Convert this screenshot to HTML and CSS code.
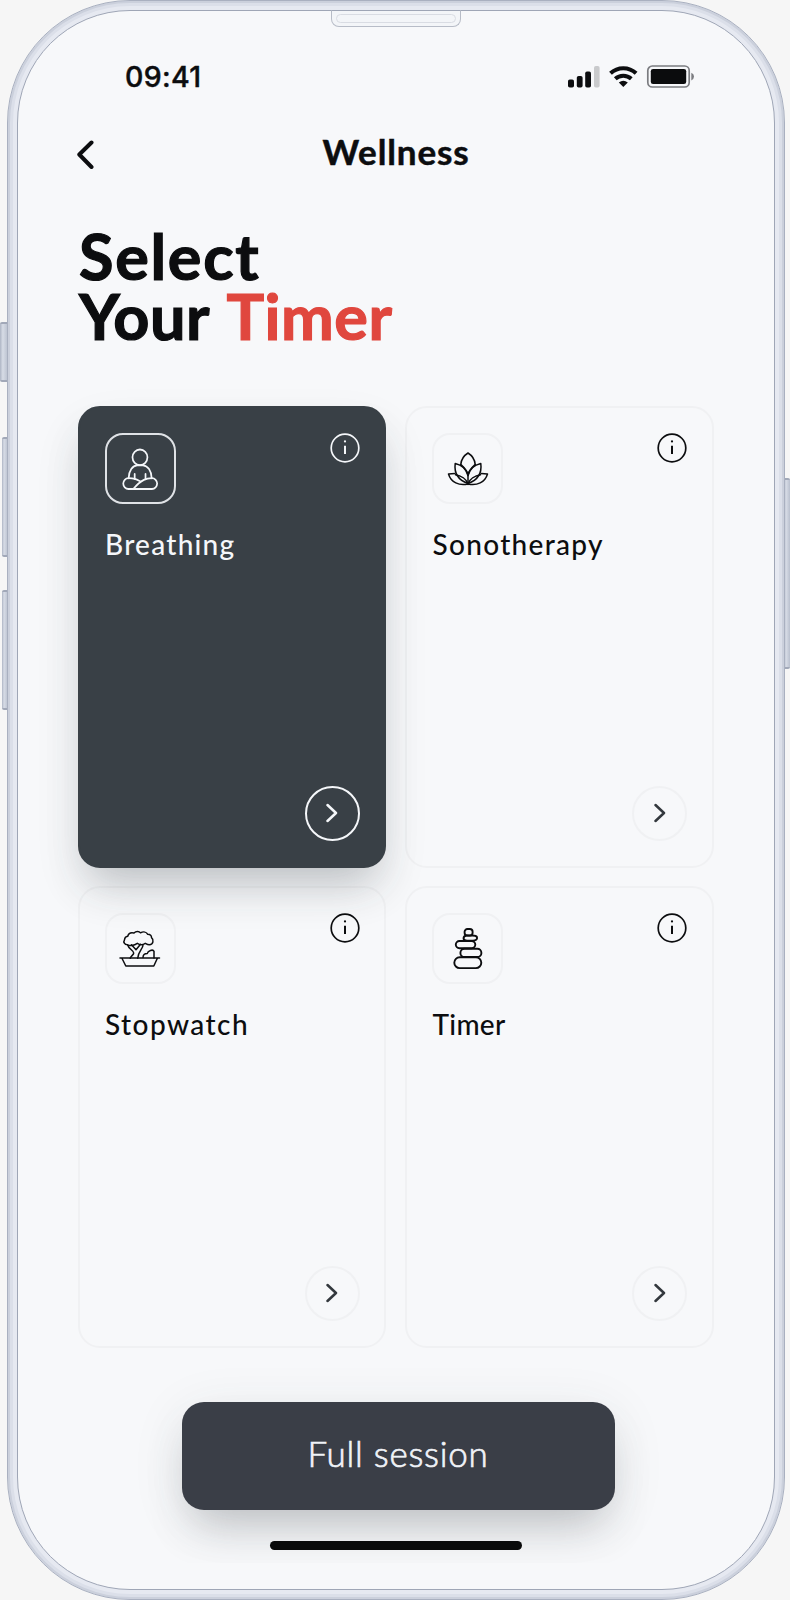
FILE: index.html
```html
<!DOCTYPE html>
<html lang="en">
<head>
<meta charset="utf-8">
<title>Wellness</title>
<link rel="stylesheet" href="styles.css">
</head>
<body>
<svg class="defs" width="0" height="0">
  <symbol id="info" viewBox="0 0 30 30"><circle cx="15" cy="15" r="13.8" fill="none" stroke="currentColor" stroke-width="1.7"/><path d="M15 12.7v8.300" stroke="currentColor" stroke-width="2"/><circle cx="15" cy="8.400" r="1.100" fill="currentColor"/></symbol>
  <symbol id="next" viewBox="0 0 12 20"><path d="M1.500 2l8.500 8-8.500 8" fill="none" stroke="currentColor" stroke-width="2.500" stroke-linecap="round" stroke-linejoin="round"/></symbol>
</svg>
<div class="stage">
  <i class="key key-mute"></i><i class="key key-up"></i><i class="key key-down"></i><i class="key key-power"></i>
  <main class="phone">
    <div class="speaker"><span></span></div>
    <header class="status">
      <span class="time">09:41</span>
      <svg class="signals" width="126" height="24" viewBox="0 0 126 24">
        <g fill="#0c0d0f"><rect y="14.500" width="6" height="8" rx="1.800"/><rect x="8.800" y="11" width="5.800" height="11.500" rx="1.800"/><rect x="17.200" y="6.500" width="5.800" height="16" rx="1.800"/></g>
        <rect x="26" y="1" width="5.600" height="21.500" rx="1.800" fill="#c9cacc"/>
        <g fill="none" stroke="#0c0d0f" stroke-width="4"><path d="M42.500 8.300a18.600 18.600 0 0 1 25.600 0"/><path d="M47.300 13.800a11.700 11.700 0 0 1 16 0"/></g>
        <path d="M50.800 17.500q4.500-3.700 9 0l-4.500 4.400z" fill="#0c0d0f"/>
        <rect x="79.800" y="1" width="41.400" height="21" rx="4.500" fill="none" stroke="#7b7c80" stroke-width="1.700"/>
        <rect x="82.800" y="4" width="35.400" height="15" rx="2.300" fill="#0b0c0d"/>
        <path d="M123.300 7.800q2.700 1.200 2.700 3.800t-2.700 3.800z" fill="#7b7c80"/>
      </svg>
    </header>
    <nav class="nav">
      <svg class="back" width="20" height="30" viewBox="0 0 20 30"><path d="M15.500 3.500L3.300 15.500 15.500 28" fill="none" stroke="#0c0d0f" stroke-width="4" stroke-linecap="round" stroke-linejoin="round"/></svg>
      <span class="page-title">Wellness</span>
    </nav>
    <h1 class="headline"><span class="line-a">Select</span><span class="line-b">Your <em>Timer</em></span></h1>
    <section class="grid">
      <article class="card active">
        <div class="card-top">
          <div class="tile"><svg width="42" height="42" viewBox="0 0 42 42"><g class="ink" transform="translate(.8 0) scale(.96 1)"><circle cx="21" cy="9.300" r="7.800"/><path d="M9.200 30.300C9.300 22.500 13.500 17.500 18 17.300h6.200c4.800.3 8.900 5.200 9 13"/><path d="M15.500 31v-5M26.800 31v-5"/><path d="M14 41C23 31 28 30.200 33.500 30.200a5.300 5.300 0 0 1 0 10.800H9a5.300 5.300 0 0 1 0-10.800c6 0 7.500.8 12.300 3.200"/></g></svg></div>
          <svg class="info"><use href="#info"/></svg>
        </div>
        <h2 class="t-breathing">Breathing</h2>
        <button class="go"><svg><use href="#next"/></svg></button>
      </article>
      <article class="card">
        <div class="card-top">
          <div class="tile"><svg width="42" height="42" viewBox="0 0 42 42"><g class="ink thin"><path d="M21 36.500V26.500M13.800 16.500C14.200 11 17 7.500 21 5c4 2.500 6.800 6 7.200 11.500"/><path d="M13.800 16.500C16.500 19 20 22 21 27c1-5 4.500-8 7.200-10.500"/><path d="M21 35.500C11 32 7 25 8.200 15.500c7 1.500 11.300 6 12.800 12M21 35.500C31 32 35 25 33.800 15.500c-7 1.500-11.300 6-12.800 12"/><path d="M7.800 25.600L1.500 26C4 34.500 12 38 21 36c-1.500-4.800-7-8.200-12.500-9.200M34.200 25.600l6.300.4C38 34.500 30 38 21 36c1.500-4.800 7-8.200 12.500-9.200"/></g></svg></div>
          <svg class="info"><use href="#info"/></svg>
        </div>
        <h2 class="t-sonotherapy">Sonotherapy</h2>
        <button class="go"><svg><use href="#next"/></svg></button>
      </article>
      <article class="card">
        <div class="card-top">
          <div class="tile"><svg width="42" height="42" viewBox="0 0 42 42"><g class="ink thin"><path d="M8.500 16.800c-3 0-4.500-2.800-3-5 .2-2 1-3.300 3.200-3.500C9.500 5.500 12 4.200 15 5c2-2 5-2 6.500-.2 3-1.500 6-.8 7.300 1.500 2.500 0 3.800 1.500 3.700 3.300 2.500 2 2 7-2.200 7.200-1.800 0-2.800-.8-4-1.500-3 2-5.800 1.500-8 0-3 2-7.800 3.200-9.800 1.500z"/><path d="M8.700 17c1 4 6 5.500 6 8 0 2-2.700 2.500-3.500 5.300M24 17c0 4-5 6.500-5.300 13.300M12.500 16.800l4.500 5 4.500-5.500"/><path d="M24 29.500c0-3.500 2-4 4.300-4 .5-3 5.700-4.500 6.700-2.200V30"/><path d="M1 30h39.500M2.800 30l4 8h28l3.700-8"/></g></svg></div>
          <svg class="info"><use href="#info"/></svg>
        </div>
        <h2 class="t-stopwatch">Stopwatch</h2>
        <button class="go"><svg><use href="#next"/></svg></button>
      </article>
      <article class="card">
        <div class="card-top">
          <div class="tile"><svg width="42" height="42" viewBox="0 0 42 42"><g class="ink bold"><rect x="17.600" y="1" width="8" height="6.500" rx="2.800"/><path d="M19.500 7.500c5 .5 9.500-1 10.500 1.700.6 2.400-1.500 3.500-4 3.500h-6c-4.500 0-4.500-4.500-.5-5.200z"/><rect x="8.800" y="13" width="19.500" height="7.200" rx="3.600"/><rect x="13.400" y="20.800" width="21" height="8.200" rx="4.100"/><rect x="7.300" y="29.300" width="27" height="10.800" rx="5.400"/></g></svg></div>
          <svg class="info"><use href="#info"/></svg>
        </div>
        <h2 class="t-timer">Timer</h2>
        <button class="go"><svg><use href="#next"/></svg></button>
      </article>
    </section>
    <footer class="footer">
      <button class="session">Full session</button>
      <div class="home"></div>
    </footer>
  </main>
</div>
</body>
</html>
```
FILE: styles.css
```css
* { box-sizing: border-box; }
body { margin: 0; background: #f6f6f6; font-family: Lato, "Open Sans", sans-serif; color: #0c0d0f; }
.defs { position: absolute; }
.stage { position: relative; width: 790px; height: 1600px; padding: 0 5px 0 7px; overflow: hidden; }
.phone {
  position: relative; height: 1600px; border-radius: 123px; padding: 10px 11px 11px;
  border: 1px solid #a9b0c0;
  background: #f7f8fa;
  box-shadow: inset 0 0 0 2px #cbd0dc, inset 0 0 0 5px #dbdfe9, inset 0 0 0 10px #e6e9f1;
}
.phone::before {
  content: ""; position: absolute; inset: 9px; border: 1.500px solid #9fa6b6; border-radius: 113px;
  background: #f7f8fa;
}
.phone > * { position: relative; }
.key { position: absolute; width: 6px; background: linear-gradient(90deg, #aeb5c4, #d7dce6 35%, #b9c0ce); border-radius: 2px 0 0 2px; border-top: 2px solid #a1a8b8; border-bottom: 2px solid #a1a8b8; }
.key-mute { left: 0; top: 322px; height: 60px; width: 8px; }
.key-up { left: 2px; top: 437px; height: 120px; }
.key-down { left: 2px; top: 590px; height: 120px; }
.key-power { right: 0; top: 478px; height: 191px; border-radius: 0 2px 2px 0; }
.speaker { width: 130px; height: 17px; margin: -1px 0 0 312px; padding: 3px 4px; border: 1.500px solid #b7bcc7; border-top-color: #9fa6b6; border-radius: 0 0 8px 8px; background: #f3f5f8; }
.speaker span { display: block; height: 9px; border: 1px solid #d9dce3; border-radius: 5px; }
.status { display: flex; justify-content: space-between; align-items: center; height: 24px; margin: 38px 79px 0 106px; }
.time { font: 500 28.500px/24px Inter, sans-serif; letter-spacing: .3px; -webkit-text-stroke: .4px currentColor; }
.nav { display: flex; align-items: center; height: 40px; margin: 42px 0 0 57px; }
.back { margin-top: 5px; }
.page-title { margin-left: 226.500px; font-size: 35px; line-height: 40px; font-weight: 700; letter-spacing: .9px; white-space: nowrap; -webkit-text-stroke: .5px currentColor; }
.headline { margin: 55px 0 0 60px; font-size: 63px; line-height: 59.700px; font-weight: 700; white-space: nowrap; -webkit-text-stroke: 1.200px currentColor; }
.headline span { display: block; }
.line-a { letter-spacing: 1.700px; }
.line-b { letter-spacing: .5px; word-spacing: 4px; }
.headline em { font-style: normal; color: #e0473e; }
.grid { display: grid; grid-template-columns: 308.500px 308.500px; grid-auto-rows: 461.500px; gap: 18.500px 19px; margin: 61px 0 0 58.500px; }
.card { display: flex; flex-direction: column; border: 2px solid #f0f1f3; border-radius: 22px; padding: 25px 24.500px 25px 25px; }
.card.active { position: relative; z-index: 1; background: #394046; border-color: #394046; color: #f5f7fa; box-shadow: 0 24px 40px -12px rgba(57,64,70,.25), 0 22px 50px -2px rgba(57,64,70,.09); }
.card-top { display: flex; justify-content: space-between; align-items: flex-start; }
.tile { display: grid; place-items: center; width: 71px; height: 71px; border: 2px solid #f0f1f3; border-radius: 18px; }
.active .tile { border-color: #dfe2e6; }
.info { width: 30px; height: 30px; margin-top: -.5px; }
.ink { fill: none; stroke: currentColor; stroke-width: 1.800; stroke-linecap: round; stroke-linejoin: round; }
.ink.thin { stroke-width: 1.500; }
.ink.bold { stroke-width: 1.900; }
.card h2 { margin: 20px 0 0 .5px; font-size: 28px; line-height: 40px; font-weight: 500; white-space: nowrap; }
.t-breathing { letter-spacing: 1.250px; }
.t-sonotherapy { letter-spacing: 1.300px; }
.t-stopwatch { letter-spacing: 1.450px; }
.t-timer { letter-spacing: .3px; }
.go { display: grid; place-items: center; align-self: flex-end; margin: auto 0 0; width: 55px; height: 55px; padding: 0; border: 2px solid #f0f1f3; border-radius: 50%; background: none; color: #33383d; }
.go svg { width: 12px; height: 20px; }
.active .go { border: 2px solid #f5f7fa; color: #f5f7fa; }
.footer { display: flex; flex-direction: column; align-items: center; width: 756px; height: 215px; padding-top: 54px; overflow: hidden; }
.session { width: 433px; height: 108px; margin-left: 2px; padding: 0 0 6px; border: 0; border-radius: 22px; background: #3a3e47; color: #f0f3f8; font: 300 35px Lato, sans-serif; letter-spacing: .75px; -webkit-text-stroke: .7px currentColor; box-shadow: 0 26px 44px -12px rgba(58,62,71,.26), 0 10px 54px rgba(58,62,71,.09); }
.home { width: 252px; height: 9px; margin: 31px 3px 0 0; border-radius: 5px; background: #090a0b; position: relative; }
```
